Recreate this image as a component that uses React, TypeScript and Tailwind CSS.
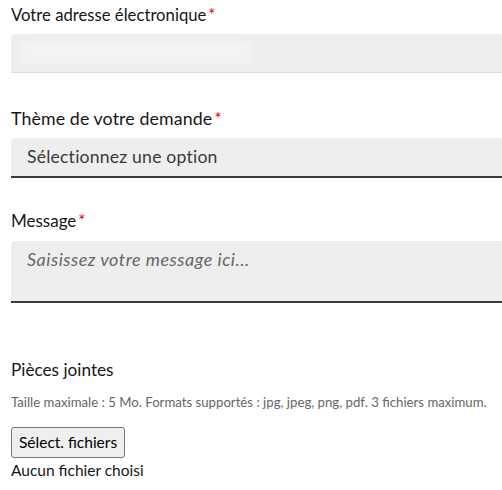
import React from 'react';

function Label({ text, required, size }: { text: string; required?: boolean; size: string }) {
  return (
    <div className={`${size} leading-6 text-[#161616]`}>
      {text}
      {required && <span className="text-[#e1000f] ml-[2px]">*</span>}
    </div>
  );
}

export default function App() {
  return (
    <div
      className="w-[502px] h-[490px] overflow-hidden bg-white pl-[11px]"
      style={{ fontFamily: 'Lato, "Noto Sans", sans-serif' }}
    >
      <div className="pt-[3px]">
        <Label text="Votre adresse électronique" required size="text-[16.7px]" />
        <div className="mt-[7px] w-[520px] h-[39px] bg-[#eeeeee] border-b border-[#dddddd] rounded-tl-[3px] relative">
          <div className="absolute left-[10px] top-[8px] w-[230px] h-[22px] bg-[#f3f3f3] blur-[3px]" />
        </div>
      </div>

      <div className="mt-[33px]">
        <Label text="Thème de votre demande" required size="text-[17.8px] tracking-[0.1px]" />
        <div className="mt-[8px] w-[520px] h-[40px] bg-[#eeeeee] border-b-2 border-[#3a3a3a] rounded-tl-[3px] flex items-center pl-[16px] text-[17.6px] tracking-[0.2px] text-[#3a3a3a]">
          Sélectionnez une option
        </div>
      </div>

      <div className="mt-[31px]">
        <Label text="Message" required size="text-[17px]" />
        <div className="mt-[8px] w-[520px] h-[62px] bg-[#eeeeee] border-b-2 border-[#3a3a3a] rounded-tl-[3px] pl-[16px] pt-[5px] text-[18px] tracking-[0.5px] italic text-[#666666]">
          Saisissez votre message ici...
        </div>
      </div>

      <div className="mt-[55px] text-[17.2px] leading-6 text-[#161616]">Pièces jointes</div>
      <div className="mt-[10px] text-[13.2px] leading-5 text-[#666666]">
        Taille maximale : 5 Mo. Formats supportés : jpg, jpeg, png, pdf. 3 fichiers maximum.
      </div>
      <button className="mt-[15px] h-[31px] px-[7px] border border-[#767676] rounded-[3px] bg-[#efefef] text-[15.5px] text-black">
        Sélect. fichiers
      </button>
      <div className="mt-[2px] text-[15.5px] leading-5 text-[#161616]">Aucun fichier choisi</div>
    </div>
  );
}
